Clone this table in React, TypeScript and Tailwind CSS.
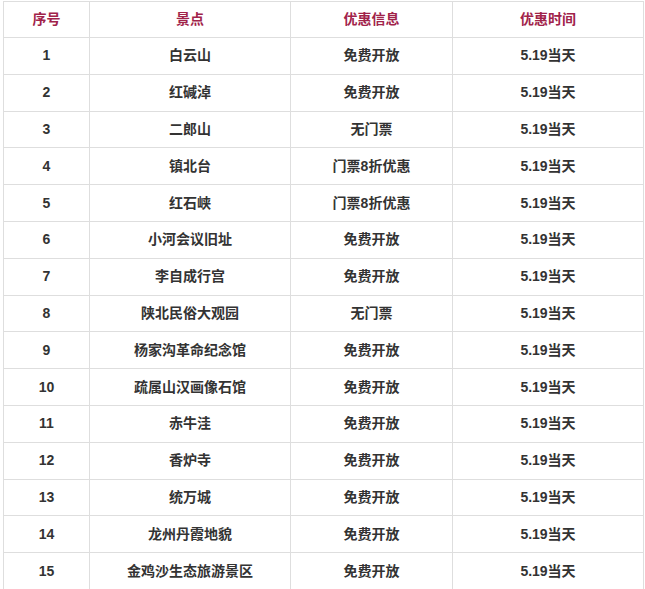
const rows = [
  ['1', '白云山', '免费开放', '5.19当天'],
  ['2', '红碱淖', '免费开放', '5.19当天'],
  ['3', '二郎山', '无门票', '5.19当天'],
  ['4', '镇北台', '门票8折优惠', '5.19当天'],
  ['5', '红石峡', '门票8折优惠', '5.19当天'],
  ['6', '小河会议旧址', '免费开放', '5.19当天'],
  ['7', '李自成行宫', '免费开放', '5.19当天'],
  ['8', '陕北民俗大观园', '无门票', '5.19当天'],
  ['9', '杨家沟革命纪念馆', '免费开放', '5.19当天'],
  ['10', '疏属山汉画像石馆', '免费开放', '5.19当天'],
  ['11', '赤牛洼', '免费开放', '5.19当天'],
  ['12', '香炉寺', '免费开放', '5.19当天'],
  ['13', '统万城', '免费开放', '5.19当天'],
  ['14', '龙州丹霞地貌', '免费开放', '5.19当天'],
  ['15', '金鸡沙生态旅游景区', '免费开放', '5.19当天'],
];

const headers = ['序号', '景点', '优惠信息', '优惠时间'];

export default function App() {
  return (
    <div
      className="w-[645px] h-[589px] overflow-hidden bg-white pl-[3px] pt-[1px]"
      style={{ fontFamily: '"Liberation Sans", Arial, "Noto Sans CJK SC", sans-serif' }}
    >
      <div className="w-[641px] border-l border-t border-r border-[#dedede] text-[14px] font-bold">
        {/* 表头 */}
        <div className="grid grid-cols-[86px_201px_162px_1fr] h-[36px] border-b border-[#dedede] text-[#a1234a]">
          {headers.map((h, i) => (
            <div
              key={h}
              className={
                'flex items-center justify-center' + (i < 3 ? ' border-r border-[#dedede]' : '')
              }
            >
              {h}
            </div>
          ))}
        </div>
        {rows.map((r) => (
          <div
            key={r[0]}
            className="grid grid-cols-[86px_201px_162px_1fr] h-[36.8px] border-b border-[#dedede] text-[#333333]"
          >
            {r.map((c, i) => (
              <div
                key={i}
                className={
                  'flex items-center justify-center' + (i < 3 ? ' border-r border-[#dedede]' : '')
                }
              >
                {c}
              </div>
            ))}
          </div>
        ))}
      </div>
    </div>
  );
}
